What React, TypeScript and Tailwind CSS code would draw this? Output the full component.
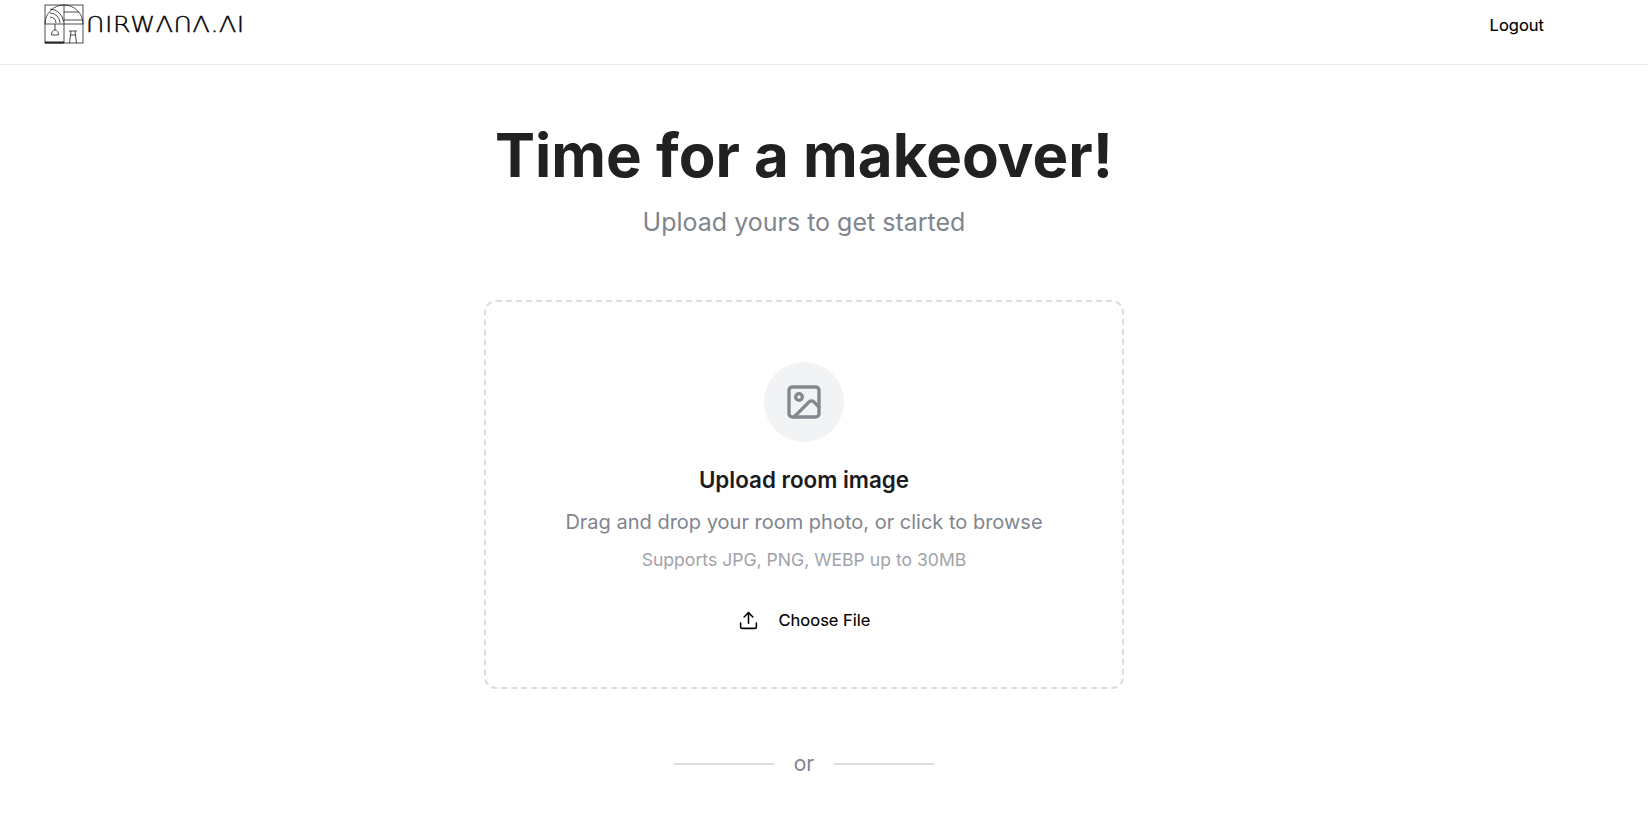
import { ImageIcon, Upload } from "lucide-react";

function LogoMark() {
  return (
    <svg width="40" height="40" viewBox="0 0 40 40" fill="none" stroke="#222" strokeWidth="0.8" className="shrink-0">
      <rect x="1" y="1" width="38" height="38" />
      <path d="M20 1V39" />
      <path d="M1 20A19 19 0 0 1 20 1A19 19 0 0 1 39 20" />
      <path d="M1 20H39M20 8H35M20 16H39" />
      <path d="M1 38.5H20" strokeWidth="2" />
      <path d="M6 13A6 6 0 0 1 12 19M6 9A10 10 0 0 1 16 19M6 5A14 14 0 0 1 19.5 18" />
      <path d="M11 20V26" />
      <path d="M7.5 31C7.5 28 9 26 11 26C13 26 14.5 28 14.5 31H7.5Z" />
      <path d="M25 27H33M26 31H32M27 27L25.5 39M31 27L32.5 39" />
    </svg>
  );
}

export default function App() {
  return (
    <div className="min-h-screen bg-white font-['Inter',sans-serif] overflow-hidden">
      <header className="h-[65px] border-b border-[#e5e7eb] flex items-start justify-between pl-11 pr-[104px]">
        <div className="flex items-start gap-[2px] pt-[4px]">
          <LogoMark />
          <span
            aria-label="NIRWANA.AI"
            className="mt-[7px] origin-left scale-x-[1.2] whitespace-nowrap text-[21px] leading-[28px] tracking-[0.5px] text-black [-webkit-text-stroke:0.4px_#000] font-['DejaVu_Sans',sans-serif] font-extralight"
          >
            ՈIRWΛՈΛ.ΛI
          </span>
        </div>
        <button className="mt-[14px] h-[22px] text-[16.5px] leading-[22px] font-normal text-black [-webkit-text-stroke:0.15px_#000]">Logout</button>
      </header>
      <main className="flex flex-col items-center pr-10">
        <h1 className="mt-[54px] text-[60px] leading-[72px] font-bold text-[#212124]">Time for a makeover!</h1>
        <p className="mt-[15px] text-[25px] leading-8 text-[#80858d]">Upload yours to get started</p>
        <div className="mt-[62px] w-[640px] h-[389px] border-2 border-dashed border-[#dcdde0] rounded-xl flex flex-col items-center">
          <div className="mt-[60px] w-20 h-20 rounded-full bg-[#f2f3f5] flex items-center justify-center">
            <ImageIcon size={40} strokeWidth={2} className="text-[#84888e]" />
          </div>
          <h2 className="mt-[22px] text-[22.4px] leading-[32px] font-semibold text-[#1b1b1f]">Upload room image</h2>
          <p className="mt-[10px] text-xl leading-[32px] text-[#80858d]">Drag and drop your room photo, or click to browse</p>
          <p className="mt-[8px] text-[17.6px] leading-[28px] text-[#a1a3a9]">Supports JPG, PNG, WEBP up to 30MB</p>
          <button className="mt-[26px] h-10 flex items-center gap-5 text-[16.5px] font-normal text-black [-webkit-text-stroke:0.15px_#000]">
            <Upload size={21} strokeWidth={1.75} />
            <span>Choose File</span>
          </button>
        </div>
        <div className="mt-[61px] flex items-center gap-5">
          <div className="w-[100px] h-[2px] bg-[#dcdce0]" />
          <span className="text-[21px] leading-7 text-[#80858d]">or</span>
          <div className="w-[100px] h-[2px] bg-[#dcdce0]" />
        </div>
      </main>
    </div>
  );
}
